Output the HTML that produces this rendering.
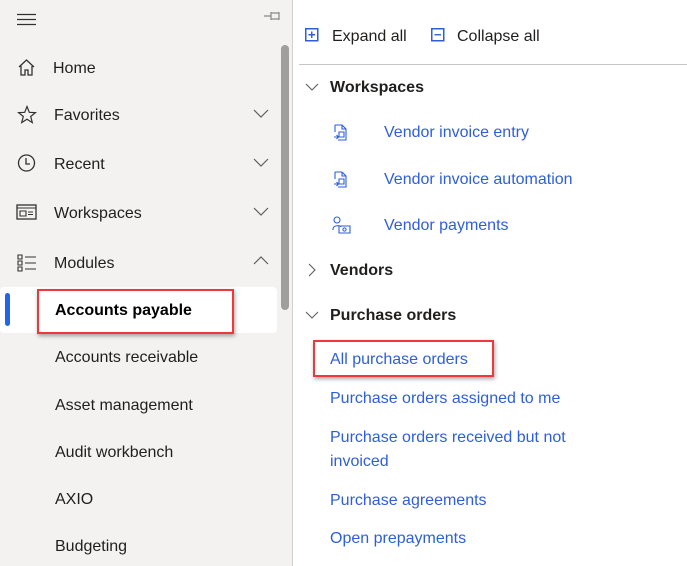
<!DOCTYPE html>
<html><head><style>
*{margin:0;padding:0;box-sizing:border-box}
body{width:687px;height:566px;overflow:hidden;font-family:"Liberation Sans",sans-serif;background:#fff;position:relative;color:#201f1e}
.l{position:absolute;left:0;top:0;width:293px;height:566px;background:#f3f2f1;border-right:1px solid #d2d0ce}
.t{position:absolute;font-size:16px;line-height:20px;white-space:nowrap;margin-top:1px}
.a{color:#2e5fd8}
svg{position:absolute}
</style></head><body>
<div class="l"></div>
<svg style="left:17px;top:13px" width="20" height="14"><path d="M0 1.5H19M0 6.5H19M0 11.5H19" stroke="#323130" stroke-width="1.2"/></svg>
<svg style="left:263px;top:9px" width="20" height="14"><path d="M1 7H8M8 3V11M8 4H16M8 10H16M16 3V11" stroke="#8a8886" fill="none" stroke-width="1.2"/></svg>
<div style="position:absolute;left:281px;top:45px;width:8px;height:265px;background:#a19f9d;border-radius:4px"></div>
<svg style="left:17px;top:58px" width="20" height="20"><path d="M2 9L9.5 2L17 9M4 8V17H8V12H11V17H15V8" stroke="#323130" fill="none" stroke-width="1.3"/></svg>
<div class="t" style="left:53px;top:58px">Home</div>
<svg style="left:17px;top:105px" width="20" height="20"><path d="M10 1.5L12.3 7.3L18.5 7.6L13.7 11.5L15.3 17.6L10 14.2L4.7 17.6L6.3 11.5L1.5 7.6L7.7 7.3Z" stroke="#323130" fill="none" stroke-width="1.2"/></svg>
<div class="t" style="left:54px;top:105px">Favorites</div>
<svg style="left:17px;top:153px" width="20" height="20"><circle cx="9.5" cy="10" r="8" stroke="#323130" fill="none" stroke-width="1.3"/><path d="M9 5V11H13" stroke="#323130" fill="none" stroke-width="1.3"/></svg>
<div class="t" style="left:54px;top:154px">Recent</div>
<svg style="left:16px;top:204px" width="22" height="18"><rect x="1" y="1" width="19" height="14" stroke="#323130" fill="none" stroke-width="1.3"/><path d="M1 4H20M4 7H10V12H4ZM12 8H17M12 10.5H17" stroke="#323130" fill="none" stroke-width="1.1"/></svg>
<div class="t" style="left:54px;top:203px">Workspaces</div>
<svg style="left:17px;top:253px" width="20" height="20"><path d="M1 2H5V6H1ZM1 8H5V12H1ZM1 14H5V18H1ZM8 4H19M8 10H19M8 16H19" stroke="#323130" fill="none" stroke-width="1.1"/></svg>
<div class="t" style="left:54px;top:253px">Modules</div>
<svg style="left:252px;top:107px" width="18" height="12"><path d="M2 3L9 10L16 3" stroke="#605e5c" fill="none" stroke-width="1.2"/></svg>
<svg style="left:252px;top:156px" width="18" height="12"><path d="M2 3L9 10L16 3" stroke="#605e5c" fill="none" stroke-width="1.2"/></svg>
<svg style="left:252px;top:205px" width="18" height="12"><path d="M2 3L9 10L16 3" stroke="#605e5c" fill="none" stroke-width="1.2"/></svg>
<svg style="left:252px;top:254px" width="18" height="12"><path d="M2 10L9 3L16 10" stroke="#605e5c" fill="none" stroke-width="1.2"/></svg>
<div style="position:absolute;left:0;top:287px;width:277px;height:46px;background:#fff;border-radius:4px"></div>
<div style="position:absolute;left:5px;top:293px;width:5px;height:33px;background:#2266e3;border-radius:3px"></div>
<div style="position:absolute;left:37px;top:289px;width:197px;height:45px;border:2px solid #f0373c;box-shadow:1px 2px 4px rgba(0,0,0,.35)"></div>
<div class="t" style="left:55px;top:300px;font-weight:bold;color:#000">Accounts payable</div>
<div class="t" style="left:55px;top:347px">Accounts receivable</div>
<div class="t" style="left:55px;top:395px">Asset management</div>
<div class="t" style="left:55px;top:442px">Audit workbench</div>
<div class="t" style="left:55px;top:489px">AXIO</div>
<div class="t" style="left:55px;top:536px">Budgeting</div>

<svg style="left:305px;top:28px" width="14" height="14"><rect x="0.75" y="0.75" width="12" height="12" stroke="#2e5fd8" fill="none" stroke-width="1.5"/><path d="M3.5 6.75H10M6.75 3.5V10" stroke="#2e5fd8" stroke-width="1.4"/></svg>
<div class="t" style="left:332px;top:26px">Expand all</div>
<svg style="left:431px;top:28px" width="14" height="14"><rect x="0.75" y="0.75" width="12" height="12" stroke="#2e5fd8" fill="none" stroke-width="1.5"/><path d="M3.5 6.75H10" stroke="#2e5fd8" stroke-width="1.4"/></svg>
<div class="t" style="left:457px;top:26px">Collapse all</div>
<div style="position:absolute;left:299px;top:64px;width:388px;height:1px;background:#c8c6c4"></div>
<svg style="left:305px;top:82px" width="14" height="10"><path d="M1 2L7 8L13 2" stroke="#605e5c" fill="none" stroke-width="1.1"/></svg>
<div class="t" style="left:330px;top:77px;font-weight:bold">Workspaces</div>
<svg style="left:333px;top:124px" width="16" height="18"><path d="M2 1H9L13 5V16H5M2 1V8M9 1V5H13M6 8H11V13H6ZM1 13H5M3.5 11L5.5 13L3.5 15" stroke="#2e5fd8" fill="none" stroke-width="1.1"/></svg>
<div class="t a" style="left:384px;top:122px">Vendor invoice entry</div>
<svg style="left:333px;top:171px" width="16" height="18"><path d="M2 1H9L13 5V16H5M2 1V8M9 1V5H13M6 8H11V13H6ZM1 13H5M3.5 11L5.5 13L3.5 15" stroke="#2e5fd8" fill="none" stroke-width="1.1"/></svg>
<div class="t a" style="left:384px;top:169px">Vendor invoice automation</div>
<svg style="left:332px;top:216px" width="20" height="18"><circle cx="5" cy="4" r="3" stroke="#2e5fd8" fill="none" stroke-width="1.1"/><path d="M1 13C1 9 9 9 9 11M7 10H18V17H7ZM1 13V14" stroke="#2e5fd8" fill="none" stroke-width="1.1"/><circle cx="12.5" cy="13.5" r="1.6" stroke="#2e5fd8" fill="none"/></svg>
<div class="t a" style="left:384px;top:215px">Vendor payments</div>
<svg style="left:307px;top:263px" width="10" height="14"><path d="M2 1L8 7L2 13" stroke="#605e5c" fill="none" stroke-width="1.1"/></svg>
<div class="t" style="left:330px;top:260px;font-weight:bold">Vendors</div>
<svg style="left:305px;top:310px" width="14" height="10"><path d="M1 2L7 8L13 2" stroke="#605e5c" fill="none" stroke-width="1.1"/></svg>
<div class="t" style="left:330px;top:305px;font-weight:bold">Purchase orders</div>
<div style="position:absolute;left:313px;top:340px;width:181px;height:37px;border:2px solid #f0373c;box-shadow:1px 2px 4px rgba(0,0,0,.35)"></div>
<div class="t a" style="left:330px;top:349px">All purchase orders</div>
<div class="t a" style="left:330px;top:388px">Purchase orders assigned to me</div>
<div class="t a" style="left:330px;top:427px">Purchase orders received but not</div>
<div class="t a" style="left:330px;top:451px">invoiced</div>
<div class="t a" style="left:330px;top:490px">Purchase agreements</div>
<div class="t a" style="left:330px;top:528px">Open prepayments</div>
</body></html>
